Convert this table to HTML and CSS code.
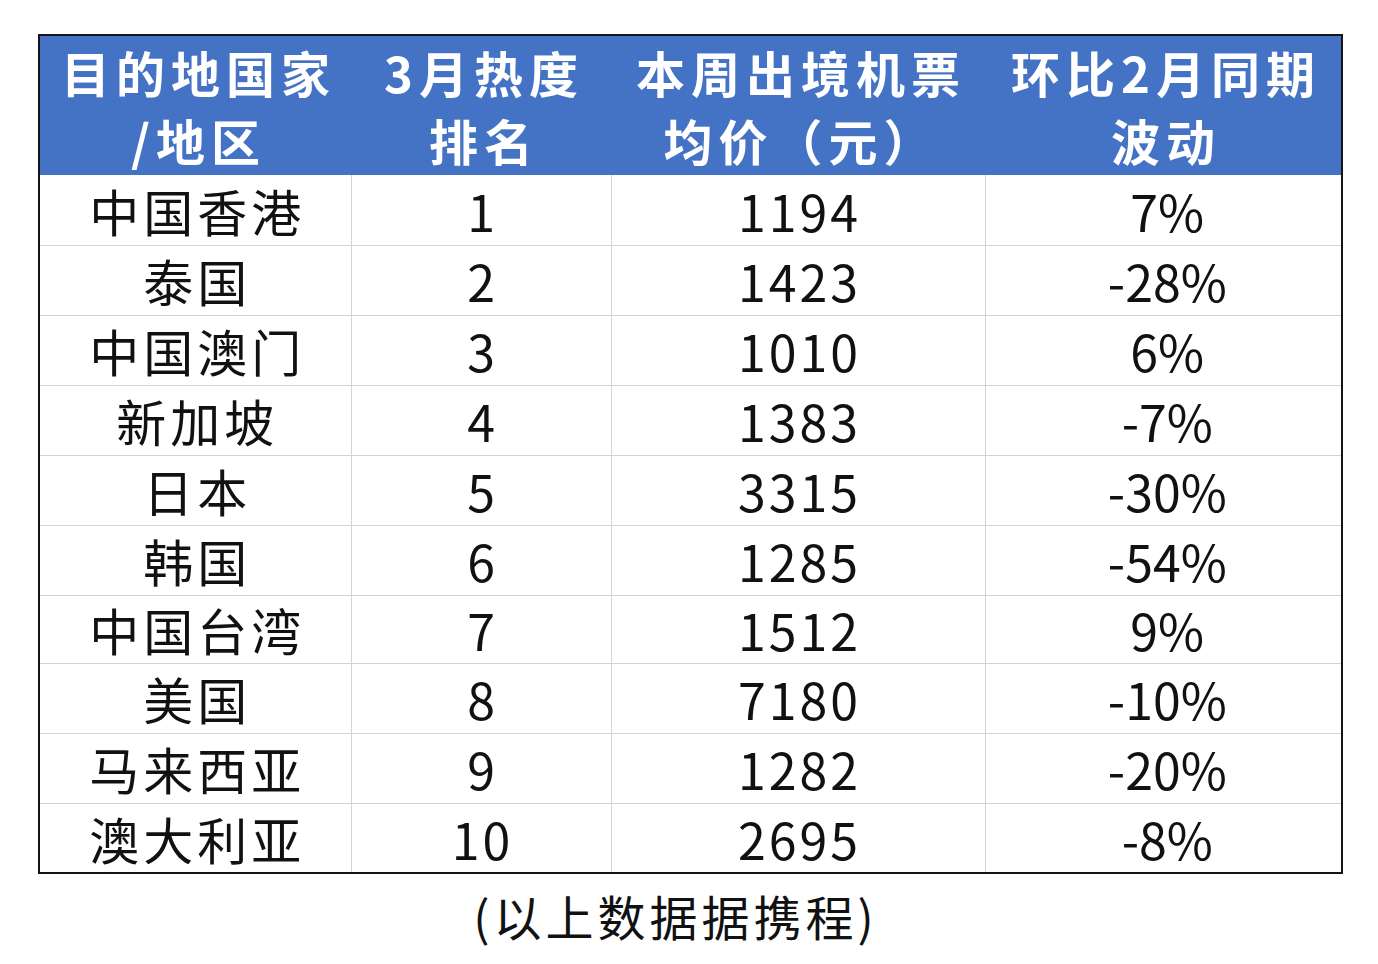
FILE: index.html
```html
<!DOCTYPE html>
<html lang="zh-CN">
<head>
<meta charset="utf-8">
<title>出境游热度</title>
<link rel="stylesheet" href="styles.css">
</head>
<body>
<div class="page">
  <div class="frame">
    <table class="grid">
      <colgroup>
        <col class="c1"><col class="c2"><col class="c3"><col class="c4">
      </colgroup>
      <thead>
        <tr class="head">
          <th>目的地国家<br>/地区</th>
          <th>3月热度<br>排名</th>
          <th>本周出境机票<br>均价（元）</th>
          <th>环比2月同期<br>波动</th>
        </tr>
      </thead>
      <tbody>
        <tr><td>中国香港</td><td class="num">1</td><td class="num">1194</td><td class="pct">7%</td></tr>
        <tr><td>泰国</td><td class="num">2</td><td class="num">1423</td><td class="pct">-28%</td></tr>
        <tr><td>中国澳门</td><td class="num">3</td><td class="num">1010</td><td class="pct">6%</td></tr>
        <tr><td>新加坡</td><td class="num">4</td><td class="num">1383</td><td class="pct">-7%</td></tr>
        <tr><td>日本</td><td class="num">5</td><td class="num">3315</td><td class="pct">-30%</td></tr>
        <tr><td>韩国</td><td class="num">6</td><td class="num">1285</td><td class="pct">-54%</td></tr>
        <tr class="short"><td>中国台湾</td><td class="num">7</td><td class="num">1512</td><td class="pct">9%</td></tr>
        <tr><td>美国</td><td class="num">8</td><td class="num">7180</td><td class="pct">-10%</td></tr>
        <tr><td>马来西亚</td><td class="num">9</td><td class="num">1282</td><td class="pct">-20%</td></tr>
        <tr class="last"><td>澳大利亚</td><td class="num">10</td><td class="num">2695</td><td class="pct">-8%</td></tr>
      </tbody>
    </table>
  </div>
  <p class="source">(以上数据据携程)</p>
</div>
</body>
</html>
```

FILE: styles.css
```css
html, body {
  margin: 0;
  padding: 0;
  background: #ffffff;
}

body {
  font-family: "Noto Sans CJK SC", "Noto Sans", sans-serif;
  color: #111111;
}

.page {
  padding: 34px 0 0 38px;
  width: 1305px;
}

.frame {
  border: 2px solid #151515;
  width: 1301px;
}

.grid {
  width: 1301px;
  border-collapse: collapse;
  table-layout: fixed;
}

.c1 { width: 311px; }
.c2 { width: 260px; }
.c3 { width: 374px; }
.c4 { width: 356px; }

.head th {
  background: #4472c4;
  color: #ffffff;
  font-weight: 700;
  font-size: 49px;
  line-height: 68px;
  letter-spacing: 6px;
  height: 139px;
  padding: 0 0 0 6px;
  text-align: center;
  vertical-align: middle;
}

.grid td {
  height: 70px;
  padding: 0 0 0 4px;
  box-sizing: border-box;
  text-align: center;
  vertical-align: middle;
  font-size: 50px;
  font-weight: 400;
  letter-spacing: 4px;
  line-height: 60px;
  border-right: 1px solid #d3d3d3;
  border-bottom: 1px solid #d3d3d3;
}

.grid td.num {
  letter-spacing: 3px;
  padding-left: 3px;
}

.grid td.pct {
  letter-spacing: 0;
  padding-left: 8px;
}

.grid tr.short td {
  height: 68px;
}

.grid tr.last td {
  height: 69px;
  border-bottom: none;
}

.grid td:last-child {
  border-right: none;
}

.source {
  margin: 6px 0 0 0;
  padding-right: 30px;
  text-align: center;
  font-size: 48px;
  line-height: 70px;
  letter-spacing: 4px;
  color: #111111;
}
```
